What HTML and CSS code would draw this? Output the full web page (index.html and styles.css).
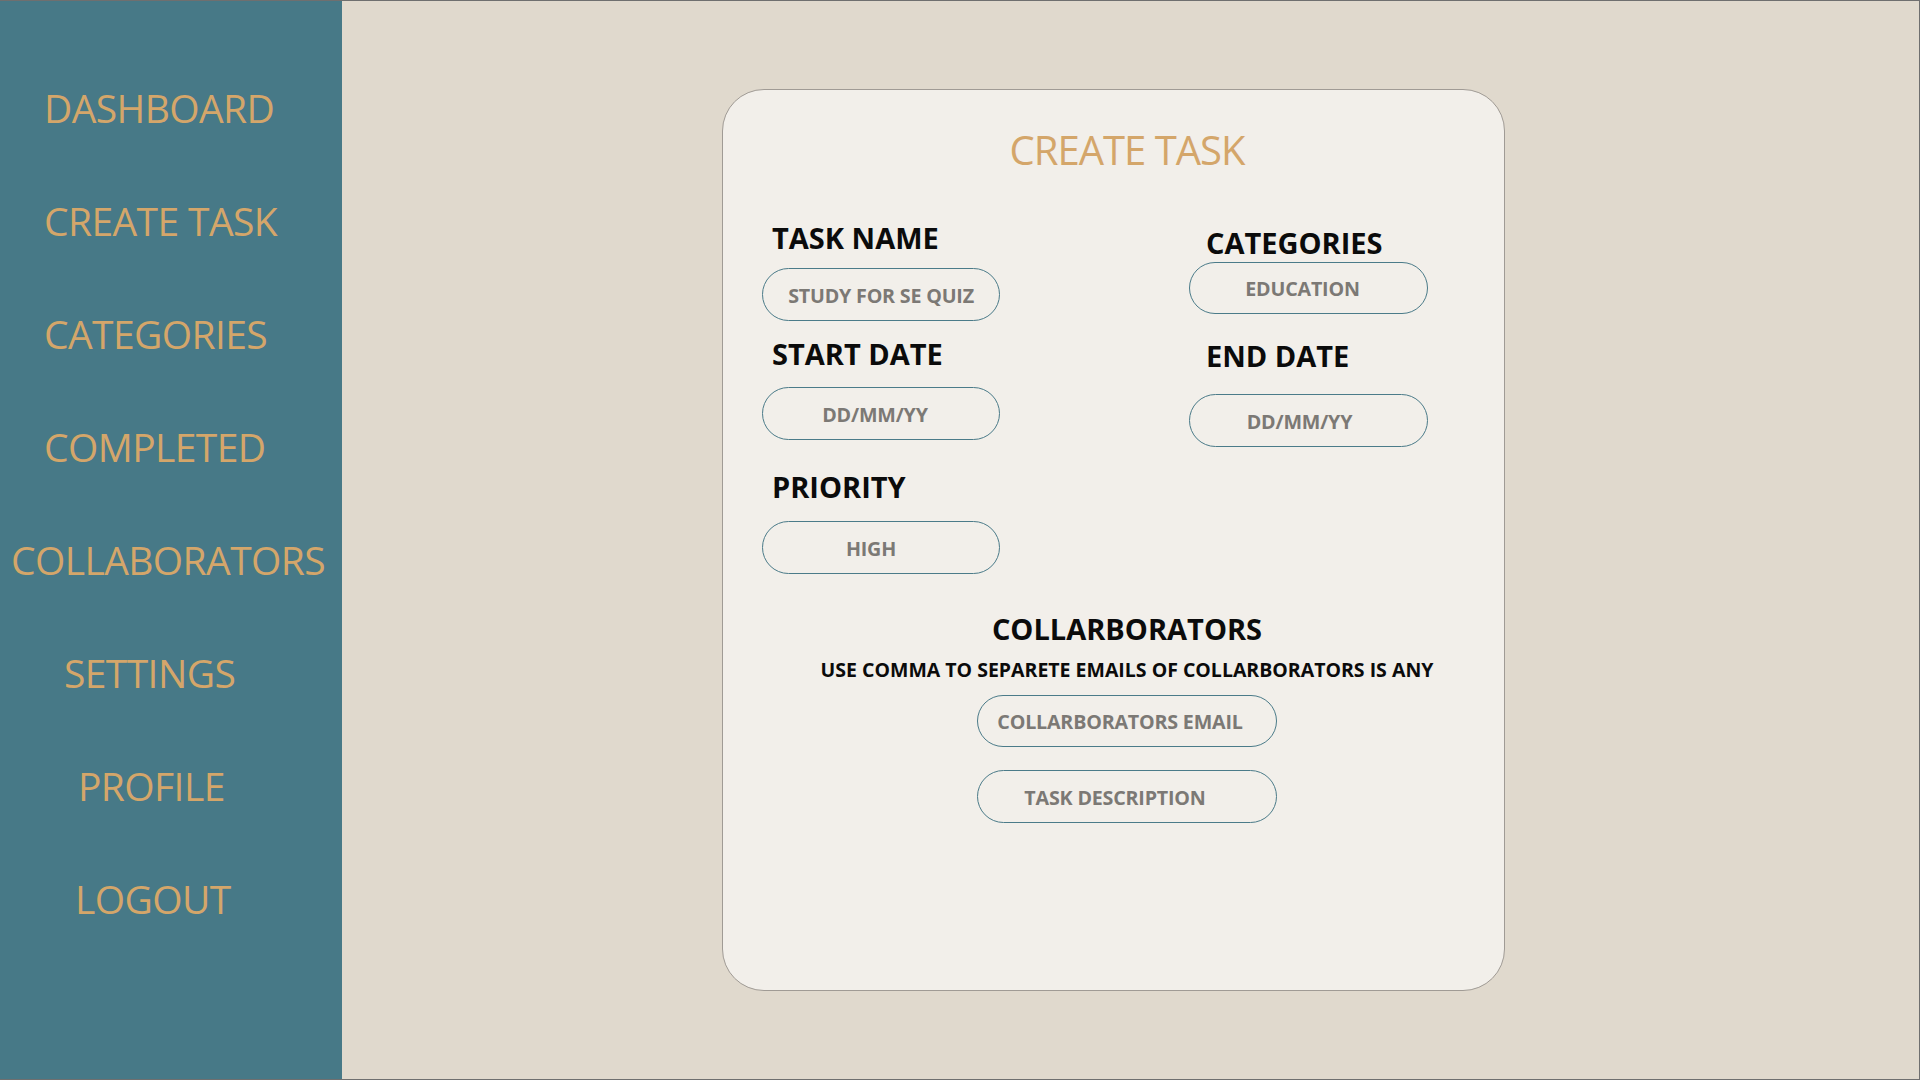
FILE: index.html
```html
<!DOCTYPE html>
<html lang="en">
<head>
<meta charset="utf-8">
<title>Create Task</title>
<link rel="stylesheet" href="styles.css">
</head>
<body>
<div class="app">
  <nav class="sidebar">
    <a class="nav-item">DASHBOARD</a>
    <a class="nav-item">CREATE TASK</a>
    <a class="nav-item">CATEGORIES</a>
    <a class="nav-item">COMPLETED</a>
    <a class="nav-item nav-item--collab">COLLABORATORS</a>
    <a class="nav-item nav-item--settings">SETTINGS</a>
    <a class="nav-item nav-item--profile">PROFILE</a>
    <a class="nav-item nav-item--logout">LOGOUT</a>
  </nav>
  <main class="main">
    <section class="card">
      <h1 class="card-title">CREATE TASK</h1>
      <div class="form-grid">
        <div class="col col--left">
          <div class="field-label">TASK NAME</div>
          <div class="pill pill--first">STUDY FOR SE QUIZ</div>
          <div class="field-label field-label--second">START DATE</div>
          <div class="pill pill--second">DD/MM/YY</div>
          <div class="field-label field-label--third">PRIORITY</div>
          <div class="pill pill--third">HIGH</div>
        </div>
        <div class="col col--right">
          <div class="field-label field-label--right">CATEGORIES</div>
          <div class="pill pill--cat">EDUCATION</div>
          <div class="field-label field-label--right field-label--end">END DATE</div>
          <div class="pill pill--end">DD/MM/YY</div>
        </div>
      </div>
      <div class="collab">
        <div class="collab-title">COLLARBORATORS</div>
        <div class="collab-hint">USE COMMA TO SEPARETE EMAILS OF COLLARBORATORS IS ANY</div>
        <div class="pill pill--wide pill--email">COLLARBORATORS EMAIL</div>
        <div class="pill pill--wide pill--desc">TASK DESCRIPTION</div>
      </div>
    </section>
  </main>
</div>
</body>
</html>
```

FILE: styles.css
```css
* {
  box-sizing: border-box;
}

html, body {
  margin: 0;
  padding: 0;
}

body {
  font-family: "Open Sans", "Noto Sans", sans-serif;
  background: #e0d9cd;
}

.app {
  width: 1920px;
  height: 1080px;
  display: flex;
  border-top: 1px solid #6f6f6f;
  border-right: 1px solid #6f6f6f;
  border-bottom: 1px solid #6f6f6f;
  overflow: hidden;
}

/* Sidebar */
.sidebar {
  width: 342px;
  flex: 0 0 342px;
  background: #477987;
  display: flex;
  flex-direction: column;
  padding-top: 50px;
}

.nav-item {
  display: block;
  color: #d4a66a;
  font-size: 39px;
  line-height: 113px;
  letter-spacing: -0.6px;
  white-space: nowrap;
  padding-left: 44px;
  text-decoration: none;
}

.nav-item--collab {
  padding-left: 11px;
}

.nav-item--settings {
  padding-left: 64px;
}

.nav-item--profile {
  padding-left: 78px;
}

.nav-item--logout {
  padding-left: 75px;
}

/* Main area */
.main {
  flex: 1;
  padding-top: 88px;
  padding-left: 380px;
}

.card {
  width: 783px;
  height: 902px;
  background: #f2efea;
  border: 1px solid #a09b95;
  border-radius: 42px;
  padding: 36px 12px 0 39px;
}

.card-title {
  margin: 0;
  text-align: center;
  font-weight: 400;
  font-size: 40px;
  line-height: 48px;
  letter-spacing: -1px;
  color: #d4a66a;
}

/* Form */
.form-grid {
  display: flex;
  gap: 189px;
  margin-top: 49px;
}

.col {
  display: flex;
  flex-direction: column;
}

.col--left {
  width: 238px;
}

.col--right {
  width: 239px;
  padding-top: 5px;
}

.field-label {
  font-weight: 700;
  font-size: 29px;
  line-height: 29px;
  color: #0b0b0b;
  padding-left: 10px;
  white-space: nowrap;
}

.field-label--second {
  margin-top: 18px;
}

.field-label--third {
  margin-top: 32px;
}

.field-label--right {
  padding-left: 17px;
}

.field-label--end {
  margin-top: 27px;
}

.pill {
  height: 53px;
  border: 1px solid #4b7b89;
  border-radius: 27px;
  display: flex;
  align-items: center;
  justify-content: center;
  padding: 1px 12px 0 0;
  font-weight: 700;
  font-size: 19.7px;
  letter-spacing: -0.2px;
  color: #7c7975;
  white-space: nowrap;
}

.pill--first {
  margin-top: 16px;
  padding-right: 0;
}

.pill--second {
  margin-top: 19px;
}

.pill--third {
  margin-top: 20px;
  padding-right: 20px;
}

.pill--cat {
  margin-top: 5px;
  height: 52px;
}

.pill--end {
  margin-top: 24px;
  height: 53px;
  padding-right: 18px;
}

/* Collaborators */
.collab {
  display: flex;
  flex-direction: column;
  align-items: center;
  margin-top: 40px;
}

.collab-title {
  font-weight: 700;
  font-size: 29px;
  line-height: 29px;
  color: #0b0b0b;
}

.collab-hint {
  margin-top: 17px;
  font-weight: 700;
  font-size: 19.5px;
  line-height: 20px;
  color: #0b0b0b;
  white-space: nowrap;
}

.pill--wide {
  width: 300px;
  height: 52px;
}

.pill--email {
  margin-top: 15px;
  padding-right: 14px;
}

.pill--desc {
  margin-top: 23px;
  height: 53px;
  padding-right: 24px;
}
```
